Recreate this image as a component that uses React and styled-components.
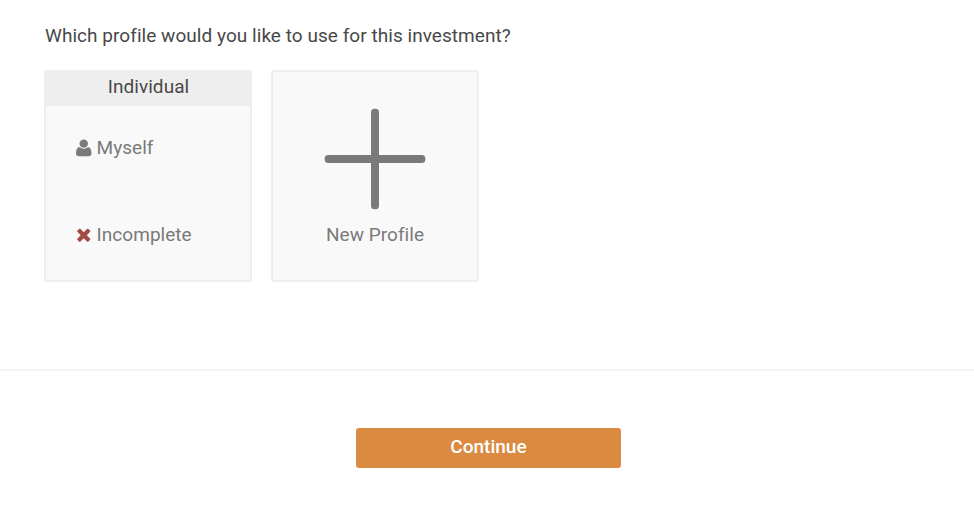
import React from "react";
import styled, { createGlobalStyle } from "styled-components";

const GlobalStyle = createGlobalStyle`
  * { box-sizing: border-box; }
  body { margin: 0; background: #fff; font-family: Roboto, sans-serif; color: #484848; }
`;

const Page = styled.main`
  height: 520px;
  overflow: hidden;
`;

const ProfileSection = styled.section`
  height: 371px;
  padding: 24px 44px 0;
  border-bottom: 2px solid #f4f4f4;
`;

const Question = styled.h1`
  margin: 0 0 22px 1px;
  font-size: 19px;
  font-weight: 400;
  line-height: 24px;
  letter-spacing: 0.045px;
  white-space: nowrap;
`;

const Profiles = styled.div`
  display: flex;
  gap: 19px;
`;

const Card = styled.div`
  width: 208px;
  height: 212px;
  border: 2px solid #eee;
  border-radius: 3px;
  background: #f9f9f9;
  color: #7a7a7a;
  font-size: 19px;
  line-height: 24px;
  letter-spacing: 0.04px;
  white-space: nowrap;
`;

const CardTitle = styled.div`
  height: 34px;
  padding: 3px 0 0 1px;
  background: #eee;
  color: #484848;
  text-align: center;
`;

const CardBody = styled.div`
  display: flex;
  flex-direction: column;
  gap: 63px;
  padding: 30px 30px 0 30.4px;
`;

const Row = styled.div`
  display: flex;
  align-items: center;
  gap: 4.7px;
`;

const NewProfile = styled(Card)`
  display: flex;
  flex-direction: column;
  align-items: center;
  gap: 13px;
  padding-top: 36px;
`;

const Icon = styled.svg`
  flex: none;
  width: 15.5px;
  height: 19.7px;
  fill: ${({ $color }) => $color};
`;

const ActionBar = styled.footer`
  display: flex;
  justify-content: center;
  padding: 57px 0 0 3px;
`;

const ContinueButton = styled.button`
  width: 265px;
  height: 40px;
  padding: 0 0 3px;
  border: 0;
  border-radius: 3px;
  background: #db8a42;
  color: #fff;
  font: 500 19px/24px Roboto, sans-serif;
`;

const PersonIcon = () => (
  <Icon $color="#7a7a7a" viewBox="0 0 1408 1792">
    <path d="M1408 1405q0 120-73 189.500t-194 69.500h-874q-121 0-194-69.500t-73-189.500q0-53 3.500-103.500t14-109 26.500-108.500 43-97.500 62-81 85.500-53.500 111.500-20q9 0 42 21.500t74.500 48 108 48 133.500 21.500 133.500-21.500 108-48 74.500-48 42-21.500q61 0 111.500 20t85.500 53.500 62 81 43 97.500 26.500 108.500 14 109 3.500 103.500z" />
    <circle cx="704" cy="512" r="384" />
  </Icon>
);

const CrossIcon = () => (
  <Icon $color="#a24a45" viewBox="0 30 1408 1792">
    <path d="M1298 1322q0 40-28 68l-136 136q-28 28-68 28t-68-28l-294-294-294 294q-28 28-68 28t-68-28l-136-136q-28-28-28-68t28-68l294-294-294-294q-28-28-28-68t28-68l136-136q28-28 68-28t68 28l294 294 294-294q28-28 68-28t68 28l136 136q28 28 28 68t-28 68l-294 294 294 294q28 28 28 68z" />
  </Icon>
);

const PlusIcon = () => (
  <svg width="102" height="102" viewBox="0 0 102 102" fill="#7a7a7a">
    <rect x="47" y="0.700" width="8" height="100.600" rx="3.500" />
    <rect x="0.700" y="47" width="100.600" height="8" rx="3.500" />
  </svg>
);

export default function App() {
  return (
    <Page>
      <GlobalStyle />
      <ProfileSection>
        <Question>Which profile would you like to use for this investment?</Question>
        <Profiles>
          <Card>
            <CardTitle>Individual</CardTitle>
            <CardBody>
              <Row><PersonIcon />Myself</Row>
              <Row><CrossIcon />Incomplete</Row>
            </CardBody>
          </Card>
          <NewProfile>
            <PlusIcon />
            <span>New Profile</span>
          </NewProfile>
        </Profiles>
      </ProfileSection>
      <ActionBar>
        <ContinueButton>Continue</ContinueButton>
      </ActionBar>
    </Page>
  );
}
